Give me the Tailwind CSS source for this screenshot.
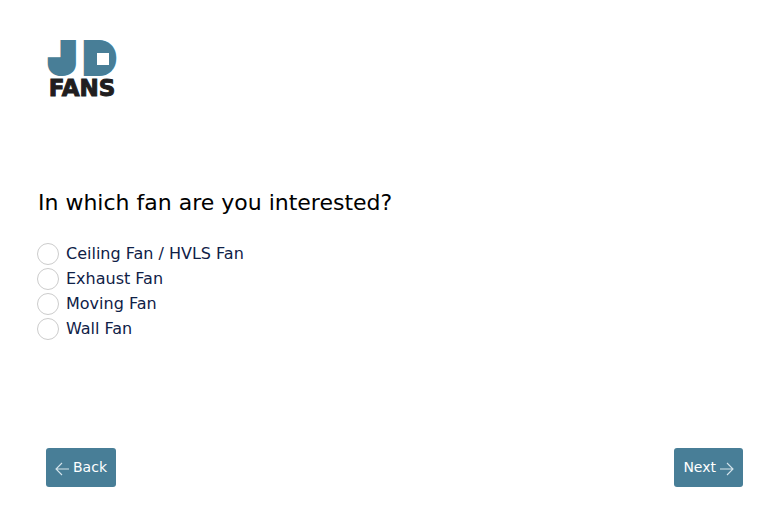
<!DOCTYPE html>
<html lang="en">
<head>
<meta charset="utf-8">
<meta name="viewport" content="width=device-width, initial-scale=1">
<title>JD Fans</title>
<script src="https://cdn.jsdelivr.net/npm/@tailwindcss/browser@4"></script>
</head>
<body class="min-h-screen bg-white font-['Verdana','DejaVu_Sans',sans-serif] text-black">
<form class="flex min-h-screen flex-col pt-10 pb-[34px]">
  <header class="px-10">
    <svg class="h-[58px] w-[84px] overflow-visible" viewBox="0 0 84 58" role="img" aria-label="JD Fans">
      <g font-family="Inter, sans-serif" font-weight="900" font-size="38" fill="#487e97" stroke="#487e97" stroke-width="8" stroke-linejoin="miter">
        <text x="11" y="32">J</text>
        <text x="46" y="32">D</text>
      </g>
      <path d="M57 13h12v12H57z" fill="#fff"/>
      <text x="42" y="56" text-anchor="middle" font-family="'DejaVu Sans', sans-serif" font-weight="700" font-size="23" fill="#211e1f" stroke="#211e1f" stroke-width="1">FANS</text>
    </svg>
  </header>
  <main class="grow px-[37px] pt-[89px]">
    <fieldset>
      <legend class="pl-px text-[22px] leading-8">In which fan are you interested?</legend>
      <div class="mt-6 flex flex-col gap-[3px] text-base text-[#0f2147]">
        <label class="flex items-center gap-[7px] leading-[22px]"><input type="radio" name="fan" class="size-[22px] appearance-none rounded-full border border-[#cccccc] bg-white checked:border-[6px] checked:border-[#487e97]">Ceiling Fan / HVLS Fan</label>
        <label class="flex items-center gap-[7px] leading-[22px]"><input type="radio" name="fan" class="size-[22px] appearance-none rounded-full border border-[#cccccc] bg-white checked:border-[6px] checked:border-[#487e97]">Exhaust Fan</label>
        <label class="flex items-center gap-[7px] leading-[22px]"><input type="radio" name="fan" class="size-[22px] appearance-none rounded-full border border-[#cccccc] bg-white checked:border-[6px] checked:border-[#487e97]">Moving Fan</label>
        <label class="flex items-center gap-[7px] leading-[22px]"><input type="radio" name="fan" class="size-[22px] appearance-none rounded-full border border-[#cccccc] bg-white checked:border-[6px] checked:border-[#487e97]">Wall Fan</label>
      </div>
    </fieldset>
  </main>
  <footer class="flex justify-between pr-[22px] pl-[46px] text-sm text-white">
    <button type="button" class="flex h-[39px] items-center gap-1 rounded-[3px] bg-[#487e97] px-[9px] pb-0.5">
      <svg class="mt-1 size-[14px]" viewBox="0 0 14 14" fill="none" stroke="#d5e5ec" stroke-width="1.1" aria-hidden="true"><path d="M14 7H1M7 1L1 7l6 6"/></svg>
      Back
    </button>
    <button type="button" class="flex h-[39px] items-center gap-1 rounded-[3px] bg-[#487e97] px-[9px] pb-0.5">
      Next
      <svg class="mt-1 size-[14px]" viewBox="0 0 14 14" fill="none" stroke="#d5e5ec" stroke-width="1.1" aria-hidden="true"><path d="M0 7h13M7 1l6 6-6 6"/></svg>
    </button>
  </footer>
</form>
</body>
</html>
